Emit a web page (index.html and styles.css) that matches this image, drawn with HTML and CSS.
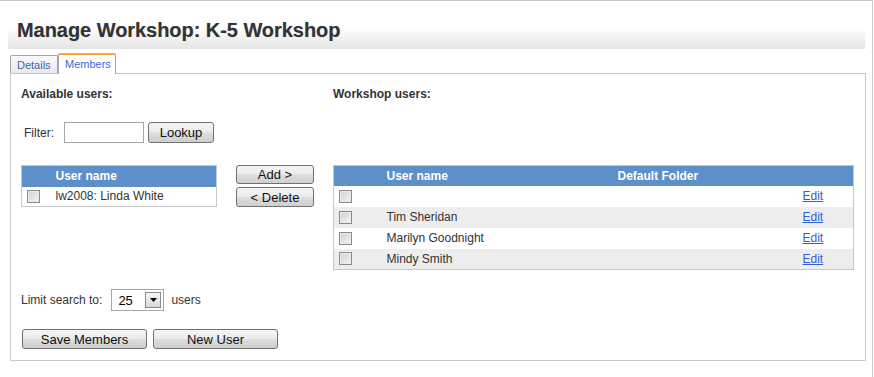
FILE: index.html
```html
<!DOCTYPE html>
<html>
<head>
<meta charset="utf-8">
<link rel="stylesheet" href="styles.css">
</head>
<body>
<div class="page">
  <div class="titlebar"><h1 class="title">Manage Workshop: K-5 Workshop</h1></div>
  <div class="tabs">
    <div class="tab">Details</div>
    <div class="tab active">Members</div>
  </div>
  <div class="panel">
    <div class="cols">
      <div class="col-left">
        <div class="heading">Available users:</div>
        <div class="filter">
          <span class="lbl">Filter:</span>
          <span class="textbox"></span>
          <button class="btn lookup">Lookup</button>
        </div>
        <table class="grid left-grid">
          <tr class="head"><th class="cb"></th><th>User name</th></tr>
          <tr><td class="cb"><span class="check"></span></td><td>lw2008: Linda White</td></tr>
        </table>
      </div>
      <div class="col-mid">
        <button class="btn add">Add &gt;</button>
        <button class="btn del">&lt; Delete</button>
      </div>
      <div class="col-right">
        <div class="heading">Workshop users:</div>
        <table class="grid right-grid">
          <tr class="head"><th class="cb"></th><th class="name">User name</th><th class="folder">Default Folder</th><th></th></tr>
          <tr><td class="cb"><span class="check"></span></td><td></td><td></td><td class="edit"><a href="#">Edit</a></td></tr>
          <tr class="alt"><td class="cb"><span class="check"></span></td><td>Tim Sheridan</td><td></td><td class="edit"><a href="#">Edit</a></td></tr>
          <tr><td class="cb"><span class="check"></span></td><td>Marilyn Goodnight</td><td></td><td class="edit"><a href="#">Edit</a></td></tr>
          <tr class="alt"><td class="cb"><span class="check"></span></td><td>Mindy Smith</td><td></td><td class="edit"><a href="#">Edit</a></td></tr>
        </table>
      </div>
    </div>
    <div class="limit">
      <span>Limit search to:</span>
      <span class="select"><span class="val">25</span><span class="arrow"><svg width="7" height="4" viewBox="0 0 7 4"><path d="M0 0h7L3.5 4z" fill="#000"/></svg></span></span>
      <span>users</span>
    </div>
    <div class="actions">
      <button class="btn big">Save Members</button>
      <button class="btn big">New User</button>
    </div>
  </div>
</div>
</body>
</html>
```
FILE: styles.css
```css
* { box-sizing: border-box; }
html, body { margin: 0; padding: 0; background: #fff; }
body { font-family: "Liberation Sans", Arial, sans-serif; font-size: 12px; color: #333; }
.page {
  width: 873px; height: 377px;
  border-top: 1px solid #c8c8c8;
  border-right: 1px solid #c8c8c8;
}
.titlebar {
  margin-left: 8px; width: 857px; height: 48px;
  background: linear-gradient(to bottom, #fff 0%, #fff 55%, #e4e4e4 100%);
  padding: 17px 0 0 9px;
}
.title {
  margin: 0; font-size: 20px; font-weight: bold; color: #333;
  line-height: 24px; letter-spacing: -0.05px;
  text-shadow: 0 0 1px rgba(80,80,80,0.35);
}
.tabs { display: flex; align-items: flex-end; margin-left: 10px; margin-top: 3px; height: 21px; }
.tab {
  height: 18px; width: 48px; padding: 3px 0 0 6px;
  border: 1px solid #a6a6a6; border-bottom: none;
  background: linear-gradient(to bottom, #fafafa, #e8e8e8);
  color: #3d62b3; font-size: 11px; line-height: 13px;
  border-radius: 2px 2px 0 0;
}
.tab.active {
  height: 21px; width: 58px; padding: 3px 0 0 6px;
  background: #fff; border-top: 2px solid #f5a833;
  color: #3c6ad9; margin-bottom: -1px; position: relative;
  border-color: #a6a6a6; border-top-color: #f5a833;
}
.panel {
  margin-left: 10px; width: 856px; height: 288px;
  border: 1px solid #c8c8c8;
  padding: 13px 0 0 10px;
}
.cols { display: flex; }
.heading { font-weight: bold; font-size: 12px; line-height: 14px; color: #333; }
.col-left { width: 196px; }
.filter { display: flex; align-items: center; margin-top: 21px; margin-left: 3px; height: 21px; }
.lbl { width: 40px; }
.textbox { width: 80px; height: 21px; border: 1px solid #a5a5a5; background: #fff; }
.btn {
  font-family: "Liberation Sans", Arial, sans-serif; font-size: 13px; color: #111;
  border: 1px solid #707070; border-radius: 3px; padding: 0;
  background: linear-gradient(to bottom, #f4f4f4 0%, #ebebeb 48%, #dddddd 52%, #cfcfcf 100%);
  line-height: 17px; cursor: default;
}
.lookup { width: 66px; height: 21px; margin-left: 4px; }
.grid { border-collapse: collapse; border: 1px solid #c8c8c8; font-size: 12px; color: #333; }
.grid th { background: #5d8fc9; color: #fff; font-weight: bold; text-align: left; padding: 0; }
.grid td { padding: 0; }
.left-grid { width: 196px; margin-top: 22px; }
.left-grid th { height: 21px; }
.left-grid td { height: 20px; }
.left-grid .cb { width: 34px; padding-left: 5px; }
.check {
  display: block; width: 13px; height: 13px;
  border: 1px solid #8a8a8a;
  background: linear-gradient(135deg, #d0d0d0, #f4f4f4);
  box-shadow: inset 0 0 0 1px #eaeaea;
}
.col-mid { width: 78px; margin-left: 19px; padding-top: 78px; display: flex; flex-direction: column; }
.add { width: 78px; height: 19px; }
.del { width: 78px; height: 20px; margin-top: 3px; }
.col-right { margin-left: 19px; width: 521px; }
.right-grid { width: 521px; margin-top: 64px; }
.right-grid th { height: 20px; }
.right-grid td { height: 21px; }
.right-grid .cb { width: 53px; padding-left: 5px; }
.right-grid .name { width: 231px; }
.right-grid .folder { width: 185px; }
.right-grid tr.alt td { background: #ededed; }
.edit a { color: #2f5fd0; text-decoration: underline; }
.limit { display: flex; align-items: center; margin-top: 19px; height: 22px; }
.select {
  display: flex; align-items: center; justify-content: space-between;
  width: 53px; height: 22px; margin: 0 7px 0 9px;
  border: 1px solid #a5a5a5; padding: 0 2px 0 6px;
  font-size: 13px; color: #000;
}
.arrow {
  width: 16px; height: 16px; border: 1px solid #8a8a8a;
  background: linear-gradient(to bottom, #f5f5f5, #d8d8d8);
  display: flex; align-items: center; justify-content: center;
}
.actions { display: flex; gap: 6px; margin-top: 18px; margin-left: 1px; }
.big { width: 125px; height: 20px; }
```
